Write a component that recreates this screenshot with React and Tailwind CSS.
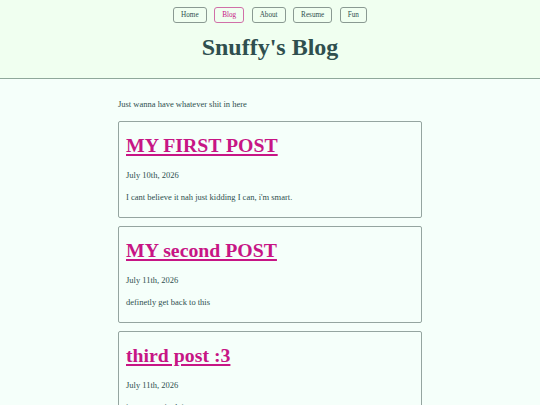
export default function App() {
  const posts = [
    { title: "MY FIRST POST", date: "July 10th, 2026", body: "I cant believe it nah just kidding I can, i'm smart." },
    { title: "MY second POST", date: "July 11th, 2026", body: "definetly get back to this" },
    { title: "third post :3", date: "July 11th, 2026", body: "i am so excited :)" },
  ];
  const nav = ["Home", "Blog", "About", "Resume", "Fun"];
  return (
    <div className="min-h-screen bg-[#f5fffa] text-[#2f4f4f] font-['Liberation_Serif',serif]">
      <header className="bg-[#f0fff0] border-b border-[#8fa89a] h-[79px] flex flex-col items-center">
        <nav className="flex gap-[7.5px] mt-[7px]">
          {nav.map((n) => (
            <a
              key={n}
              className={
                "h-[16px] px-[7px] flex items-center rounded-[3px] border text-[7.2px] " +
                (n === "Blog" ? "border-[#d070a8] text-[#c71585]" : "border-[#8a9a92] text-[#2f4f4f]")
              }
            >
              {n}
            </a>
          ))}
        </nav>
        <h1 className="mt-[10px] text-[24px] font-bold leading-[28px]">Snuffy's Blog</h1>
      </header>
      <main className="w-[304px] mx-auto pt-[20px]">
        <p className="text-[8.5px] leading-[10px]">Just wanna have whatever shit in here</p>
        <div className="flex flex-col gap-[8px] mt-[12px]">
          {posts.map((p) => (
            <div key={p.title} className="border border-[#95a5a0] rounded-[2px] px-[7px] pt-[10px] h-[97px]">
              <h2 className="text-[19.8px] font-bold leading-[26px] text-[#c71585] underline decoration-[2px] underline-offset-[2px]">
                {p.title}
              </h2>
              <p className="mt-[12px] text-[8.5px] leading-[10px]">{p.date}</p>
              <p className="mt-[12px] text-[8.5px] leading-[10px]">{p.body}</p>
            </div>
          ))}
        </div>
      </main>
    </div>
  );
}
